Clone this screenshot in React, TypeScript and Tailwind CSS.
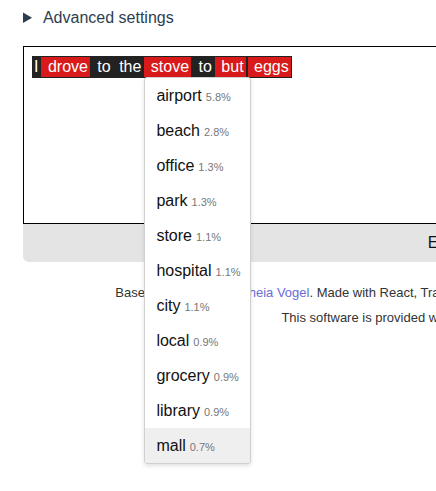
import React from "react"

const tokens = [
    { t: "I", bad: false },
    { t: " drove", bad: true },
    { t: " to", bad: false },
    { t: " the", bad: false },
    { t: " stove", bad: true, menu: true },
    { t: " to", bad: false },
    { t: " but", bad: true },
    { t: " eggs", bad: true },
]

const options = [
    ["airport", "5.8%"],
    ["beach", "2.8%"],
    ["office", "1.3%"],
    ["park", "1.3%"],
    ["store", "1.1%"],
    ["hospital", "1.1%"],
    ["city", "1.1%"],
    ["local", "0.9%"],
    ["grocery", "0.9%"],
    ["library", "0.9%"],
    ["mall", "0.7%"],
]

function Dropdown() {
    return (
        <div className="absolute left-0 top-full w-[107px] bg-white border border-[#d0d0d0] rounded-[3px] shadow-[0_2px_4px_rgba(0,0,0,0.12)] z-10 overflow-hidden">
            {options.map(([word, p], i) => (
                <div
                    key={word}
                    className={
                        "h-[35px] flex items-center pl-[11px] whitespace-nowrap " +
                        (i === options.length - 1 ? "bg-[#efefef]" : "")
                    }
                >
                    <span className="text-[16px] text-[#111]">{word}</span>
                    <span className="text-[11px] text-[#777] ml-[4px] mt-[2px]">{p}</span>
                </div>
            ))}
        </div>
    )
}

export default function App() {
    return (
        <div className="w-[436px] h-[491px] overflow-hidden bg-white font-['Liberation_Sans',Arial,sans-serif]">
            <div className="w-[918px] px-[23px] pt-[7px]">
                <details>
                    <summary className="text-[16px] leading-[22px] text-[#2c3e50] cursor-pointer">
                        <span className="ml-[3px]">Advanced settings</span>
                    </summary>
                </details>

                <div className="mt-[17px] h-[178px] border border-black px-[8px] pt-[8px]">
                    <div className="inline-flex bg-[#222] text-white text-[16px] leading-[20px] whitespace-pre">
                        {tokens.map((tok, i) => (
                            <span
                                key={i}
                                className={
                                    "relative border border-[#222] " +
                                    (tok.bad ? "bg-[#d91a1a] border-[#111] px-[2px]" : "px-[1px]")
                                }
                            >
                                {tok.t}
                                {tok.menu && <Dropdown />}
                            </span>
                        ))}
                    </div>
                </div>

                <button className="w-full h-[38px] bg-[#e4e4e4] rounded-b-[6px] text-[16px] text-[#111]">
                    Evaluate
                </button>

                <footer className="mt-[23px] text-center text-[13px] text-[#333] leading-[16px]">
                    <p>
                        Based on the idea by <a className="text-[#6b6bd6]">Theia Vogel</a>. Made with React, Transformers.js, and Tailwind. Source code is available on GitHub.
                    </p>
                    <p className="mt-[9px]">This software is provided without any warranty, so use it as is.</p>
                </footer>
            </div>
        </div>
    )
}
